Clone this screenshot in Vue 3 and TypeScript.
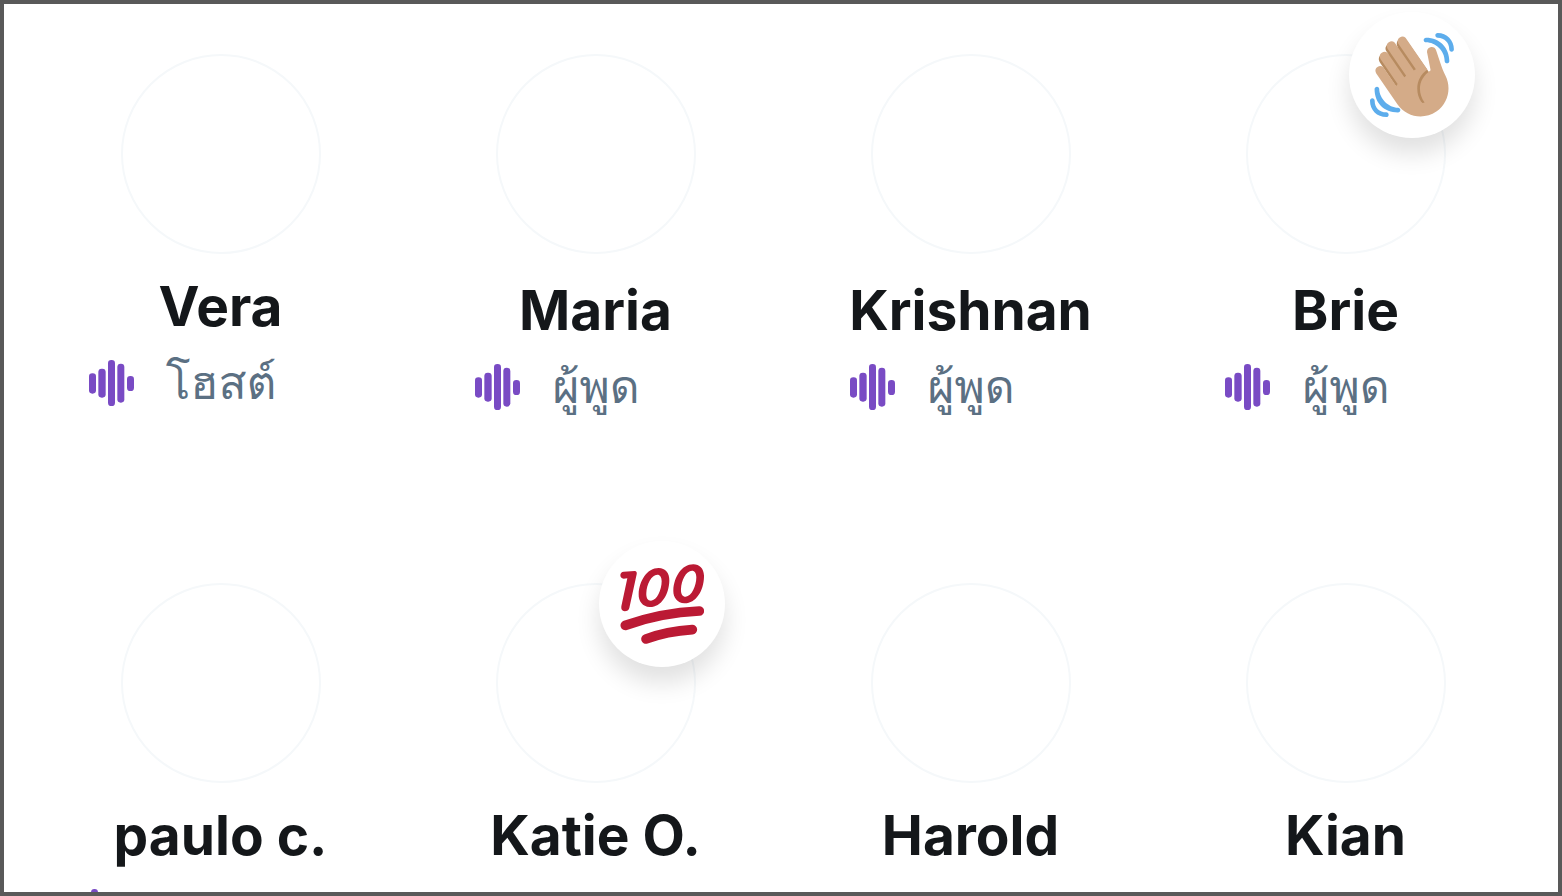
<script setup lang="ts">
type Reaction = 'wave' | 'hundred'

interface Member {
  name: string
  speaking?: boolean
  role?: string
  roomy?: boolean
  reaction?: Reaction
}

const members: Member[] = [
  { name: 'Vera', speaking: true, role: 'โฮสต์' },
  { name: 'Maria', speaking: true, role: 'ผู้พูด', roomy: true },
  { name: 'Krishnan', speaking: true, role: 'ผู้พูด', roomy: true },
  { name: 'Brie', speaking: true, role: 'ผู้พูด', roomy: true, reaction: 'wave' },
  { name: 'paulo c.', speaking: true },
  { name: 'Katie O.', reaction: 'hundred' },
  { name: 'Harold' },
  { name: 'Kian' },
]
</script>

<template>
  <main class="space">
    <ul class="members">
      <li v-for="member in members" :key="member.name" class="member" :class="{ roomy: member.roomy }">
        <div class="avatar">
          <span v-if="member.reaction" class="reaction">
            <svg v-if="member.reaction === 'wave'" class="emoji" viewBox="0 0 36 36" aria-hidden="true">
              <path fill="#B78B60" d="M4.861 9.147c.94-.657 2.357-.531 3.201.166l-.968-1.407c-.779-1.111-.5-2.313.612-3.093 1.112-.777 4.263 1.312 4.263 1.312-.786-1.122-.639-2.544.483-3.331 1.122-.784 2.67-.513 3.456.611l10.292 14.72L25 31l-11.083-4.042L4.25 12.625c-.793-1.129-.519-2.686.611-3.478z" />
              <path fill="#D4AB88" d="M2.695 17.336s-1.132-1.65.519-2.781c1.649-1.131 2.78.518 2.78.518l5.251 7.658c.181-.302.379-.6.6-.894L4.557 11.21s-1.131-1.649.519-2.78c1.649-1.131 2.78.518 2.78.518l6.855 9.997c.255-.208.516-.417.785-.622L7.549 6.732s-1.131-1.649.519-2.78c1.649-1.131 2.78.518 2.78.518l7.947 11.589c.292-.179.581-.334.871-.498L12.238 4.729s-1.131-1.649.518-2.78c1.649-1.131 2.78.518 2.78.518l7.854 11.454 1.194 1.742c-4.948 3.394-5.419 9.779-2.592 13.902.565.825 1.39.26 1.39.26-3.393-4.949-2.357-10.51 2.592-13.903L24.515 8.62s-.545-1.924 1.378-2.47c1.924-.545 2.47 1.379 2.47 1.379l1.685 5.004c.668 1.984 1.379 3.961 2.32 5.831 2.657 5.28 1.07 11.842-3.94 15.279-5.465 3.747-12.936 2.354-16.684-3.11L2.695 17.336z" />
              <path fill="#5DADEC" d="M12 32.042C8 32.042 3.958 28 3.958 24c0-.553-.405-1-.958-1s-1.042.447-1.042 1C1.958 30 6 34.042 12 34.042c.553 0 1-.489 1-1.042s-.447-.958-1-.958z" />
              <path fill="#5DADEC" d="M7 34c-3 0-5-2-5-5 0-.553-.447-1-1-1s-1 .447-1 1c0 4 3 7 7 7 .553 0 1-.447 1-1s-.447-1-1-1zM24 2c-.552 0-1 .448-1 1s.448 1 1 1c4 0 8 3.589 8 8 0 .552.448 1 1 1s1-.448 1-1c0-5.514-4-10-10-10z" />
              <path fill="#5DADEC" d="M29 .042c-.552 0-1 .406-1 .958s.448 1.042 1 1.042c3 0 4.958 2.225 4.958 4.958 0 .552.489 1 1.042 1s.958-.448.958-1C35.958 3.163 33 .042 29 .042z" />
            </svg>
            <svg v-else class="emoji" viewBox="90 66 252 252" fill="#BB1A34" stroke-linecap="round" aria-hidden="true">
              <path d="M101 95L134 93Q142 94 140 103L118 204Q115 214 104 214Q92 212 94 199L112 115L101 116Q91 115 91 105Q92 96 101 95Z" />
              <path fill-rule="evenodd" d="M206 84C226 84 239 99 238 122C237 164 213 202 179 201C158 200 145 184 146 162C148 122 171 84 206 84ZM202 104C184 104 170 134 169 158C168 173 173 182 183 182C201 182 215 149 215 124C215 111 210 104 202 104Z" />
              <path fill-rule="evenodd" d="M310 73C330 73 343 88 342 111C341 153 317 191 283 190C262 189 249 173 250 151C252 111 275 73 310 73ZM306 92C288 92 274 122 273 146C272 161 277 170 287 170C305 170 319 137 319 112C319 99 314 92 306 92Z" />
              <g fill="none" stroke="#BB1A34" stroke-width="29">
                <path d="M106 256Q213 218 328 213" />
                <path d="M168 297Q230 274 307 269" />
              </g>
            </svg>
          </span>
        </div>
        <h2 class="name">{{ member.name }}</h2>
        <p v-if="member.speaking" class="status" :class="{ unlabelled: !member.role }">
          <svg class="voice" viewBox="0 0 135 138" fill="#794BC4" aria-hidden="true">
            <rect x="0" y="40" width="21" height="61" rx="10" />
            <rect x="28" y="26" width="22" height="87" rx="10" />
            <rect x="57" y="0" width="21" height="138" rx="10" />
            <rect x="85" y="11" width="21" height="117" rx="10" />
            <rect x="114" y="48" width="21" height="45" rx="10" />
          </svg>
          <span v-if="member.role">{{ member.role }}</span>
        </p>
      </li>
    </ul>
  </main>
</template>

<style>
body {
  margin: 0;
}
</style>

<style scoped>
.space {
  box-sizing: border-box;
  height: 100vh;
  overflow: hidden;
  padding: 50px 25px 0 29px;
  border: 4px solid #595959;
  background: #fff;
  font-family: Inter, "Noto Sans", sans-serif;
}

.members {
  display: grid;
  grid-template-columns: repeat(4, 1fr);
  grid-auto-rows: 529px;
  margin: 0;
  padding: 0;
  list-style: none;
}

.member {
  display: flex;
  flex-direction: column;
  align-items: center;
  gap: 20px;
}

.roomy .name {
  margin-top: 4px;
}

.avatar {
  position: relative;
  box-sizing: border-box;
  width: 200px;
  height: 200px;
  border: 2px solid #f5f8fa;
  border-radius: 50%;
}

.reaction {
  position: absolute;
  top: -44px;
  right: -31px;
  display: grid;
  place-items: center;
  width: 126px;
  height: 126px;
  border-radius: 50%;
  background: #fff;
  box-shadow: 0 16px 24px rgba(0, 0, 0, 0.12);
}

.emoji {
  width: 84px;
  height: 84px;
}

.name {
  margin: 0;
  color: #14171a;
  font-size: 55px;
  font-weight: 700;
  line-height: 64px;
  white-space: nowrap;
}

.status {
  display: flex;
  align-items: center;
  gap: 32px;
  min-height: 50px;
  margin: 0;
  padding-right: 76px;
  color: #5b7083;
  font-family: Loma, "Noto Sans Thai Looped", sans-serif;
  font-size: 46px;
  line-height: 50px;
  white-space: nowrap;
}

.unlabelled {
  width: 221px;
}

.voice {
  width: 45px;
  height: 46px;
}
</style>
